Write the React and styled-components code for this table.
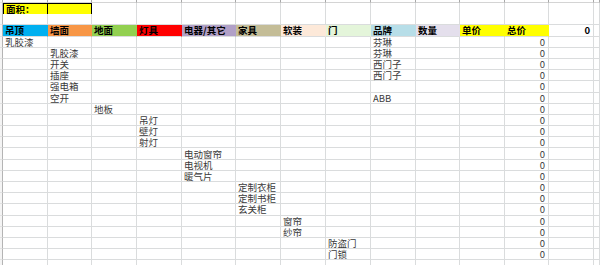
import React from 'react';
import styled, {createGlobalStyle} from 'styled-components';

const GlobalStyle = createGlobalStyle`
    html, body {
        margin: 0;
        padding: 0;
        background: #ffffff;
    }
`

// column widths as they appear in the sheet (first one is the row header edge)
const COLS = '3px 45px 44px 45px 45px 54px 45px 45px 45px 45px 44px 45px 44px 45px 1fr';
const GRID = '#dadcdd';

const Sheet = styled.div`
    width: 600px;
    height: 265px;
    overflow: hidden;
    background: #ffffff;
    font-family: "Noto Sans CJK SC", "Liberation Sans", sans-serif;
    font-size: 9.5px;
`

const Row = styled.div`
    display: grid;
    grid-template-columns: ${COLS};
    height: ${props => props.$h || '11.2px'};
`

const Cell = styled.div`
    box-sizing: border-box;
    display: flex;
    align-items: center;
    justify-content: ${props => props.$right ? 'flex-end' : 'flex-start'};
    padding: 0 3px 0 2px;
    line-height: 10px;
    white-space: nowrap;
    background: ${props => props.$bg || '#ffffff'};
    border-right: 1px solid ${props => props.$bg ? props.$bg : GRID};
    border-bottom: 1px solid ${GRID};
    color: ${props => props.$bold ? '#000000' : '#3a3a3a'};
    font-weight: ${props => props.$bold ? 'bold' : 'normal'};
`

const Edge = styled.div`
    box-sizing: border-box;
    background: #f4f4f4;
    border-right: 1px solid #b4b4b4;
    border-bottom: 1px solid #e2e2e2;
`

const Tick = styled.div`
    box-sizing: border-box;
    background: #ffffff;
    border-right: 1px solid #a8a8a8;
    border-bottom: 1px solid #d4d4d4;
`

const AreaCell = styled(Cell)`
    background: #ffff00;
    border-top: 1px solid #000000;
    border-right: 1px solid #000000;
    border-bottom: 1px solid #000000;
    border-left: ${props => props.$first ? '1px solid #000000' : 'none'};
    color: #000000;
    font-weight: bold;
`

const headers = [
    {text: '吊顶', bg: '#00b0f0'},
    {text: '墙面', bg: '#f79646'},
    {text: '地面', bg: '#92d050'},
    {text: '灯具', bg: '#ff0000'},
    {text: '电器/其它', bg: '#b1a0c7'},
    {text: '家具', bg: '#c4bd97'},
    {text: '软装', bg: '#fde9d9'},
    {text: '门', bg: '#e4f5da'},
    {text: '品牌', bg: '#b7dee8'},
    {text: '数量', bg: '#e4dfec'},
    {text: '单价', bg: '#ffff00'},
    {text: '总价', bg: '#ffff00'},
];

// [column index (0 = 吊顶), item, brand]
const items = [
    [0, '乳胶漆', '芬琳'],
    [1, '乳胶漆', '芬琳'],
    [1, '开关', '西门子'],
    [1, '插座', '西门子'],
    [1, '强电箱', ''],
    [1, '空开', 'ABB'],
    [2, '地板', ''],
    [3, '吊灯', ''],
    [3, '壁灯', ''],
    [3, '射灯', ''],
    [4, '电动窗帘', ''],
    [4, '电视机', ''],
    [4, '暖气片', ''],
    [5, '定制衣柜', ''],
    [5, '定制书柜', ''],
    [5, '玄关柜', ''],
    [6, '窗帘', ''],
    [6, '纱帘', ''],
    [7, '防盗门', ''],
    [7, '门锁', ''],
];

const EMPTY = 14;

function blankCells(from, to) {
    const cells = [];
    for (let i = from; i < to; i++) cells.push(<Cell key={i}/>);
    return cells;
}

function ItemRow({col, name, brand}) {
    const cells = [];
    for (let i = 0; i < 13; i++) {
        if (i === col) cells.push(<Cell key={i}>{name}</Cell>);
        else if (i === 8) cells.push(<Cell key={i}>{brand}</Cell>);
        else if (i === 11) cells.push(<Cell key={i} $right>0</Cell>);
        else cells.push(<Cell key={i}/>);
    }
    return (
        <Row>
            <Edge/>
            {cells}
            <Cell/>
        </Row>
    );
}

export default function App() {
    return (
        <>
            <GlobalStyle/>
            <Sheet>
                <Row $h="3px">
                    {Array.from({length: 15}, (_, i) => i === 0 ? <Edge key={i}/> : <Tick key={i}/>)}
                </Row>
                <Row>
                    <Edge/>
                    <AreaCell $first>面积：</AreaCell>
                    <AreaCell/>
                    {blankCells(3, EMPTY + 1)}
                </Row>
                <Row>
                    <Edge/>
                    {blankCells(1, EMPTY + 1)}
                </Row>
                <Row>
                    <Edge/>
                    {headers.map(h => <Cell key={h.text} $bg={h.bg} $bold>{h.text}</Cell>)}
                    <Cell $right $bold>0</Cell>
                    <Cell/>
                </Row>
                {items.map(([col, name, brand], i) => (
                    <ItemRow key={i} col={col} name={name} brand={brand}/>
                ))}
                <Row>
                    <Edge/>
                    {blankCells(1, EMPTY + 1)}
                </Row>
            </Sheet>
        </>
    );
}
